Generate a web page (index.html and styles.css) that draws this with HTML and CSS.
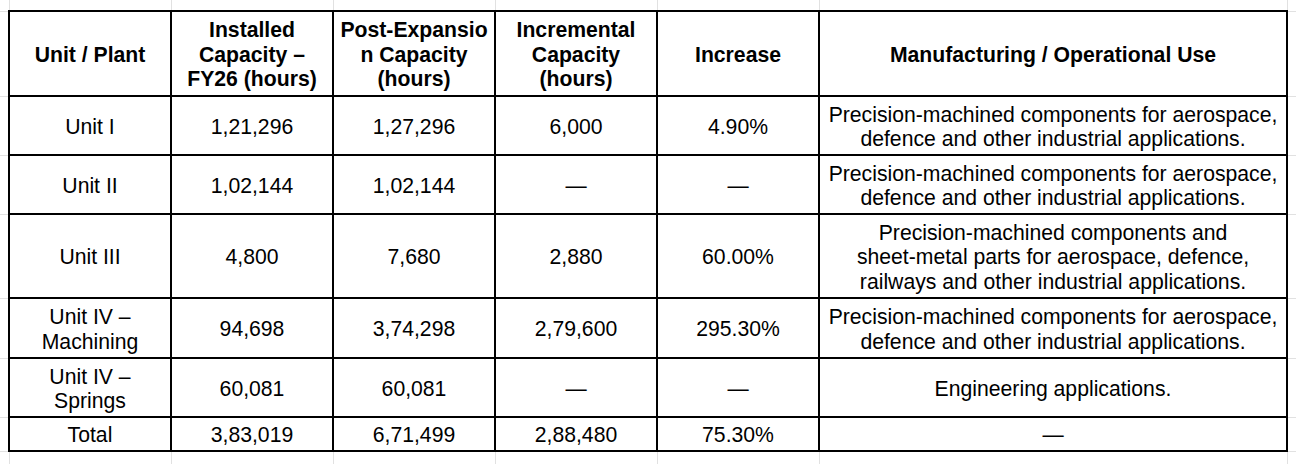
FILE: index.html
```html
<!DOCTYPE html>
<html lang="en">
<head>
<meta charset="utf-8">
<title>Capacity Expansion</title>
<link rel="stylesheet" href="styles.css">
</head>
<body>
<table class="sheet">
  <colgroup>
    <col class="col-gutter">
    <col class="col-std">
    <col class="col-std">
    <col class="col-std">
    <col class="col-std">
    <col class="col-std">
    <col class="col-wide">
    <col class="col-gutter">
  </colgroup>
  <tr class="row-top">
    <td></td><td></td><td></td><td></td><td></td><td></td><td></td><td></td>
  </tr>
  <tr class="row-head">
    <td></td>
    <th class="cell">Unit / Plant</th>
    <th class="cell">Installed<br>Capacity –<br>FY26 (hours)</th>
    <th class="cell">Post-Expansio<br>n Capacity<br>(hours)</th>
    <th class="cell">Incremental<br>Capacity<br>(hours)</th>
    <th class="cell">Increase</th>
    <th class="cell">Manufacturing / Operational Use</th>
    <td></td>
  </tr>
  <tr class="row-2">
    <td></td>
    <td class="cell">Unit I</td>
    <td class="cell">1,21,296</td>
    <td class="cell">1,27,296</td>
    <td class="cell">6,000</td>
    <td class="cell">4.90%</td>
    <td class="cell">Precision-machined components for aerospace,<br>defence and other industrial applications.</td>
    <td></td>
  </tr>
  <tr class="row-2">
    <td></td>
    <td class="cell">Unit II</td>
    <td class="cell">1,02,144</td>
    <td class="cell">1,02,144</td>
    <td class="cell">—</td>
    <td class="cell">—</td>
    <td class="cell">Precision-machined components for aerospace,<br>defence and other industrial applications.</td>
    <td></td>
  </tr>
  <tr class="row-3">
    <td></td>
    <td class="cell">Unit III</td>
    <td class="cell">4,800</td>
    <td class="cell">7,680</td>
    <td class="cell">2,880</td>
    <td class="cell">60.00%</td>
    <td class="cell">Precision-machined components and<br>sheet-metal parts for aerospace, defence,<br>railways and other industrial applications.</td>
    <td></td>
  </tr>
  <tr class="row-2b">
    <td></td>
    <td class="cell">Unit IV –<br>Machining</td>
    <td class="cell">94,698</td>
    <td class="cell">3,74,298</td>
    <td class="cell">2,79,600</td>
    <td class="cell">295.30%</td>
    <td class="cell">Precision-machined components for aerospace,<br>defence and other industrial applications.</td>
    <td></td>
  </tr>
  <tr class="row-2">
    <td></td>
    <td class="cell">Unit IV –<br>Springs</td>
    <td class="cell">60,081</td>
    <td class="cell">60,081</td>
    <td class="cell">—</td>
    <td class="cell">—</td>
    <td class="cell">Engineering applications.</td>
    <td></td>
  </tr>
  <tr class="row-1">
    <td></td>
    <td class="cell">Total</td>
    <td class="cell">3,83,019</td>
    <td class="cell">6,71,499</td>
    <td class="cell">2,88,480</td>
    <td class="cell">75.30%</td>
    <td class="cell">—</td>
    <td></td>
  </tr>
  <tr class="row-bottom">
    <td></td><td></td><td></td><td></td><td></td><td></td><td></td><td></td>
  </tr>
</table>
</body>
</html>
```

FILE: styles.css
```css
html, body {
  margin: 0;
  padding: 0;
  background: #ffffff;
}

body {
  width: 1296px;
  height: 464px;
  overflow: hidden;
  font-family: "Liberation Sans", Arial, sans-serif;
  color: #000000;
}

.sheet {
  width: 1296px;
  table-layout: fixed;
  border-collapse: collapse;
  border-spacing: 0;
  font-size: 21.2px;
  line-height: 24.5px;
}

.col-gutter { width: 9px; }
.col-std { width: 162px; }
.col-wide { width: 468px; }

.sheet td,
.sheet th {
  border: 1px solid #e1e1e1;
  padding: 0 3px;
  text-align: center;
  vertical-align: middle;
  white-space: nowrap;
  overflow: hidden;
}

.sheet tr > :first-child { border-left: none; }
.sheet tr > :last-child { border-right: none; }
.sheet .row-top > * { border-top: none; }
.sheet .row-bottom > * { border-bottom: none; }

.sheet .cell {
  border: 2px solid #000000;
  padding-top: 3px;
  font-weight: normal;
}

.sheet th.cell {
  font-weight: bold;
}

.row-top { height: 11px; }
.row-head { height: 85px; }
.row-2 { height: 59px; }
.row-2b { height: 60px; }
.row-3 { height: 84px; }
.row-1 { height: 34px; }
.row-bottom { height: 13px; }
```
